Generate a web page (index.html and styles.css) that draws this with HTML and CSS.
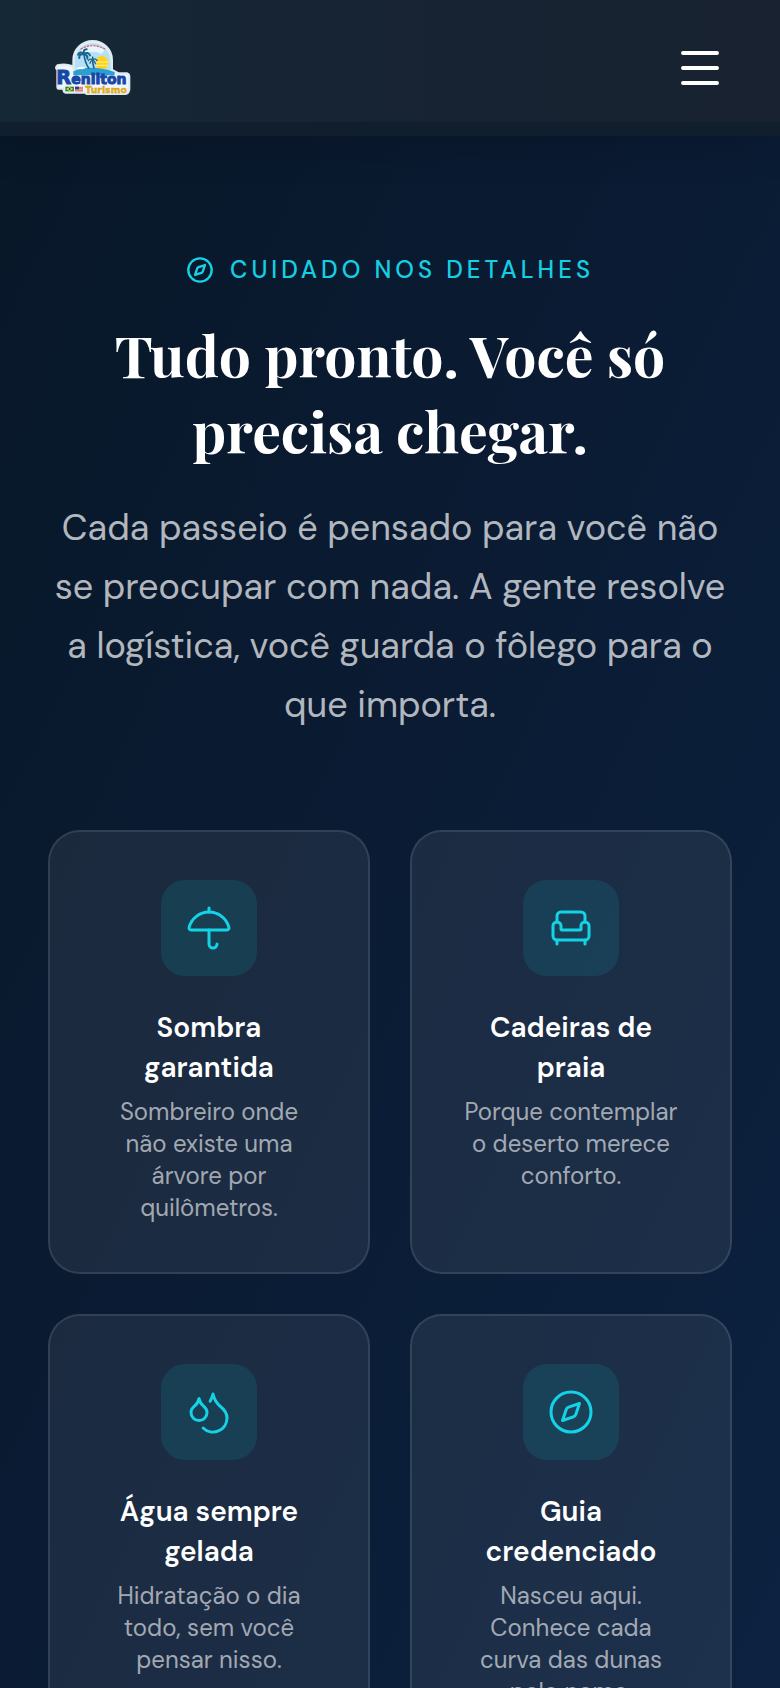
FILE: index.html
```html
<!DOCTYPE html>
<html lang="pt-BR">
<head>
    <meta charset="UTF-8">
    <meta name="viewport" content="width=device-width, initial-scale=1.0">
    <title>Renilton Turismo</title>
    <link rel="stylesheet" href="styles.css">
</head>
<body>
    <header class="header">
        <a href="#" class="logo" aria-label="Renilton Turismo">
            <svg viewBox="0 0 240 180" width="80" height="60">
                <!-- white sticker outline -->
                <g fill="#eef6fa" stroke="#dfeaf0" stroke-width="6" stroke-linejoin="round">
                    <path d="M64 100V66a58 57 0 0 1 116 0v34z"/>
                    <path d="M16 82q24-6 44 2l10 12h112l18 10h26q6 2 6 8v40q-2 14-14 14H104l-6-4H40q-6-2-6-12H20q-4 0-4-6V96q-8-6 0-14z"/>
                </g>
                <!-- sky, sun and sea -->
                <path d="M68 96V68a54 53 0 0 1 108 0v28z" fill="#b5e0f5"/>
                <path d="M86 36a54 53 0 0 1 72 0l-10 12a54 53 0 0 0-52 0z" fill="#e9f5fb"/>
                <path d="M86 34q36-22 74 0" fill="none" stroke="#d86a78" stroke-width="4" stroke-dasharray="7 3"/>
                <circle cx="150" cy="74" r="20" fill="#ffd21c"/>
                <path d="M130 72h40M132 82h36" stroke="#fff2a0" stroke-width="3"/>
                <path d="M64 100q50-22 124 2v10H64z" fill="#2a9fd0"/>
                <path d="M70 92q14-10 32-3l-10 5z" fill="#f4fbff"/>
                <!-- palm trees -->
                <g fill="none" stroke="#17648f" stroke-linecap="round">
                    <path d="M96 48q2 24 14 42M122 66q0 14 4 24" stroke-width="5"/>
                    <path d="M96 48q-12-10-18 2M96 48q-16 0-14 12M96 48q-4-14 8-14M96 48q12-8 18 4M96 48q12 4 10 14" stroke-width="6"/>
                    <path d="M122 66q-8-6-13 2M122 66q8-8 13 2M122 66q-8 4-8 10M122 66q8 4 8 11M122 66v-9" stroke-width="4"/>
                </g>
                <text x="13" y="138" class="logo-name"><tspan class="logo-initial">R</tspan>enilton</text>
                <!-- flags -->
                <rect x="40" y="146" width="26" height="14" fill="#1d8a3c"/>
                <path d="M53 147l11 6-11 6-11-6z" fill="#f6d61e"/>
                <circle cx="53" cy="153" r="3" fill="#1c3f94"/>
                <rect x="69" y="146" width="24" height="14" fill="#f5e3e6"/>
                <path d="M69 148h24M69 152h24M69 156h24M69 159h24" stroke="#cf3346" stroke-width="2"/>
                <rect x="69" y="146" width="12" height="8" fill="#293f83"/>
                <text x="100" y="165" class="logo-sub">Turismo</text>
            </svg>
        </a>
        <button class="menu-btn" aria-label="Abrir menu">
            <svg viewBox="0 0 56 56" width="56" height="56" stroke="#fff" stroke-width="4" stroke-linecap="round">
                <path d="M11 13h34M11 28h34M11 43h34"/>
            </svg>
        </button>
    </header>

    <main class="details">
        <div class="intro">
            <p class="eyebrow">
                <svg class="icon" viewBox="0 0 24 24" width="28" height="28" stroke-width="2">
                    <circle cx="12" cy="12" r="10"/>
                    <path d="m16.24 7.76-1.804 5.411a2 2 0 0 1-1.265 1.265L7.76 16.24l1.804-5.411a2 2 0 0 1 1.265-1.265z"/>
                </svg>
                <span>Cuidado nos detalhes</span>
            </p>
            <h1>Tudo pronto. Você só precisa chegar.</h1>
            <p class="lead">Cada passeio é pensado para você não se preocupar com nada. A gente resolve a logística, você guarda o fôlego para o que importa.</p>
        </div>

        <div class="cards">
            <article class="card">
                <div class="card-icon">
                    <svg class="icon" viewBox="0 0 24 24" width="48" height="48">
                        <path d="M12 13v7a2 2 0 0 0 4 0"/>
                        <path d="M12 2v2"/>
                        <path d="M20.992 13a1 1 0 0 0 .97-1.274 10.284 10.284 0 0 0-19.923 0A1 1 0 0 0 3 13z"/>
                    </svg>
                </div>
                <h2>Sombra garantida</h2>
                <p>Sombreiro onde não existe uma árvore por quilômetros.</p>
            </article>

            <article class="card">
                <div class="card-icon">
                    <svg class="icon" viewBox="0 0 24 24" width="48" height="48">
                        <path d="M19 9V6a2 2 0 0 0-2-2H7a2 2 0 0 0-2 2v3"/>
                        <path d="M3 16a2 2 0 0 0 2 2h14a2 2 0 0 0 2-2v-5a2 2 0 0 0-4 0v1.5a.5.5 0 0 1-.5.5h-9a.5.5 0 0 1-.5-.5V11a2 2 0 0 0-4 0z"/>
                        <path d="M5 18v2M19 18v2"/>
                    </svg>
                </div>
                <h2>Cadeiras de praia</h2>
                <p>Porque contemplar o deserto merece conforto.</p>
            </article>

            <article class="card">
                <div class="card-icon">
                    <svg class="icon" viewBox="0 0 24 24" width="48" height="48">
                        <path d="M7 16.3c2.2 0 4-1.83 4-4.05 0-1.16-.57-2.26-1.71-3.19S7.29 6.75 7 5.3c-.29 1.45-1.14 2.84-2.29 3.76S3 11.1 3 12.25c0 2.22 1.8 4.05 4 4.05z"/>
                        <path d="M12.56 6.6A10.97 10.97 0 0 0 14 3.02c.5 2.5 2 4.9 4 6.5s3 3.5 3 5.5a6.98 6.98 0 0 1-11.91 4.97"/>
                    </svg>
                </div>
                <h2>Água sempre gelada</h2>
                <p>Hidratação o dia todo, sem você pensar nisso.</p>
            </article>

            <article class="card">
                <div class="card-icon">
                    <svg class="icon" viewBox="0 0 24 24" width="48" height="48">
                        <circle cx="12" cy="12" r="10"/>
                        <path d="m16.24 7.76-1.804 5.411a2 2 0 0 1-1.265 1.265L7.76 16.24l1.804-5.411a2 2 0 0 1 1.265-1.265z"/>
                    </svg>
                </div>
                <h2>Guia credenciado</h2>
                <p>Nasceu aqui. Conhece cada curva das dunas pelo nome.</p>
            </article>
        </div>
    </main>
</body>
</html>
```
FILE: styles.css
```css
* {
    margin: 0;
    padding: 0;
    box-sizing: border-box;
}

body {
    height: 100vh;
    overflow: hidden;
    background: linear-gradient(115deg, #081828 0%, #0a1a31 40%, #0c2240 100%);
    color: #fff;
    font-family: 'DM Sans', Inter, sans-serif;
}

.header {
    display: flex;
    align-items: center;
    justify-content: space-between;
    height: 136px;
    padding: 0 52px;
    background: linear-gradient(to right, #152835, #172433 40%, #182231);
    border-bottom: 14px solid #101e2d;
    box-shadow: 0 8px 40px rgba(0, 0, 0, 0.15);
}

.logo {
    display: block;
    margin-top: 14px;
}

.logo svg {
    display: block;
}

.logo-name {
    font: 700 42px 'DejaVu Sans', sans-serif;
    fill: #1747a6;
    stroke: #1747a6;
    stroke-width: 3;
}

.logo-initial {
    font-size: 58px;
}

.logo-sub {
    font: 700 28px 'DejaVu Sans', sans-serif;
    fill: #f2b511;
    stroke: #c98f10;
    stroke-width: 1;
}

.menu-btn {
    width: 56px;
    height: 56px;
    margin-top: 14px;
    border: none;
    background: none;
    cursor: pointer;
}

.details {
    padding: 118px 48px 96px;
}

.intro {
    text-align: center;
    margin-bottom: 96px;
}

.icon {
    fill: none;
    stroke: #14d3e6;
    stroke-width: 1.5;
    stroke-linecap: round;
    stroke-linejoin: round;
}

.eyebrow {
    display: flex;
    align-items: center;
    justify-content: center;
    gap: 16px;
    margin-bottom: 30px;
    line-height: 32px;
    font-size: 24px;
    font-weight: 500;
    letter-spacing: 4px;
    text-transform: uppercase;
    color: #14cfe2;
}

.eyebrow .icon {
    stroke-width: 2;
}

h1 {
    margin-bottom: 30px;
    font-family: 'Playfair Display', 'Liberation Serif', serif;
    font-size: 57px;
    font-weight: 700;
    line-height: 76px;
}

.lead {
    font-size: 36px;
    line-height: 59px;
    color: rgba(255, 255, 255, 0.7);
}

.cards {
    display: grid;
    grid-template-columns: 1fr 1fr;
    gap: 40px;
}

.card {
    padding: 48px;
    border: 2px solid rgba(255, 255, 255, 0.1);
    border-radius: 32px;
    background: rgba(255, 255, 255, 0.07);
    text-align: center;
}

.card-icon {
    display: flex;
    align-items: center;
    justify-content: center;
    width: 96px;
    height: 96px;
    margin: 0 auto 32px;
    border-radius: 24px;
    background: rgba(6, 182, 192, 0.14);
}

.card h2 {
    margin-bottom: 8px;
    font-size: 28px;
    font-weight: 600;
    line-height: 40px;
}

.card p {
    font-size: 24px;
    line-height: 32px;
    color: rgba(255, 255, 255, 0.6);
}
```
